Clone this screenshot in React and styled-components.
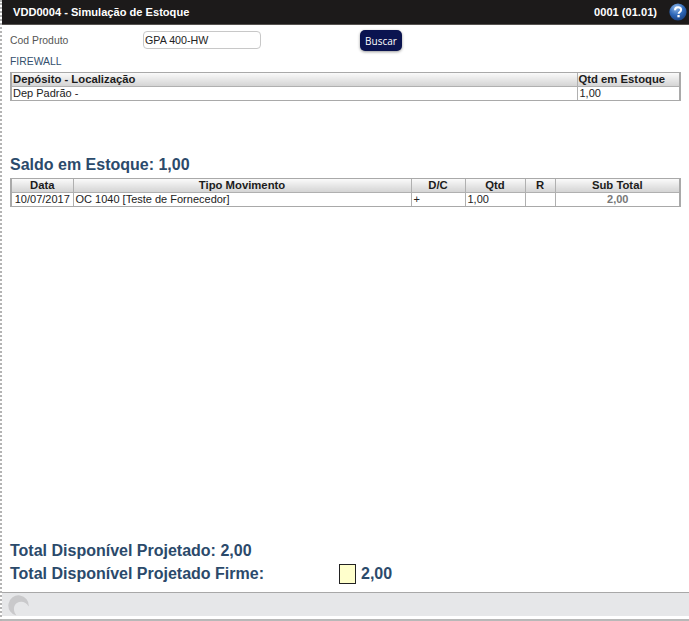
import React from 'react';
import styled, { createGlobalStyle } from 'styled-components';

const GlobalStyle = createGlobalStyle`
  html, body {
    margin: 0;
    padding: 0;
    background: #ffffff;
    font-family: "Liberation Sans", Arial, sans-serif;
  }
`;

const Page = styled.div`
  width: 689px;
  height: 621px;
  box-sizing: border-box;
  display: flex;
  flex-direction: column;
  overflow: hidden;
  background: #ffffff;
  border-left: 2px dotted #b4b4b4;
`;

const Header = styled.header`
  height: 25px;
  flex: none;
  display: flex;
  align-items: center;
  justify-content: space-between;
  padding: 0 2px 1px 11px;
  box-sizing: border-box;
  background: #1c1a1a;
  border-bottom: 1px solid #55524f;
  color: #ffffff;
  font-size: 11.1px;
  font-weight: bold;
`;

const HeaderRight = styled.div`
  display: flex;
  align-items: center;
  gap: 12px;
`;

const Content = styled.main`
  flex: 1;
  display: flex;
  flex-direction: column;
  padding: 0 8px;
  box-sizing: border-box;
  min-height: 0;
`;

const SearchRow = styled.div`
  height: 30px;
  display: flex;
  align-items: center;
  flex: none;
`;

const FieldLabel = styled.label`
  width: 133px;
  font-size: 10.4px;
  color: #555555;
  margin-top: 1px;
`;

const CodeInput = styled.input`
  width: 118px;
  height: 18px;
  box-sizing: border-box;
  padding: 0 1px;
  border: 1px solid #c8c8c8;
  border-radius: 4px;
  font-family: inherit;
  font-size: 10.7px;
  color: #222222;
  background: #ffffff;
  outline: none;
`;

const SearchButton = styled.button`
  margin-left: 99px;
  width: 42px;
  height: 21px;
  padding: 0;
  border: none;
  border-radius: 5px;
  background: #0b1450;
  box-shadow: 0 1px 3px rgba(0, 0, 0, 0.4);
  color: #ffffff;
  font-family: "Open Sans", sans-serif;
  font-size: 10px;
  margin-top: 1px;
`;

const ProductName = styled.div`
  font-size: 10.4px;
  line-height: 12px;
  color: #34506e;
  height: 17px;
  box-sizing: border-box;
  padding-top: 1px;
`;

const GridFrame = styled.div`
  width: 671px;
  box-sizing: border-box;
  flex: none;
  border: 1px solid #a9a9a9;
  border-right-width: 2px;
  border-left: 2px solid #a9a9a9;
  background: #ffffff;
`;

const Grid = styled.table`
  width: 100%;
  border-collapse: collapse;
  table-layout: fixed;
  font-size: 11px;
  color: #222222;
`;

const HeadCell = styled.th`
  height: 13px;
  padding: 0 1px;
  box-sizing: border-box;
  text-align: ${(p) => p.$align || 'center'};
  font-size: 11.3px;
  font-weight: bold;
  line-height: 13px;
  color: #1c1c1c;
  background: linear-gradient(#fafafa, #d4d4d4);
  border-left: ${(p) => (p.$first ? 'none' : '1px solid #b0b0b0')};
  border-bottom: 1px solid #b0b0b0;
  white-space: nowrap;
`;

const Cell = styled.td`
  height: 13px;
  padding: 0 1px 0 ${(p) => (p.$first ? '1px' : '2px')};
  box-sizing: border-box;
  text-align: ${(p) => p.$align || 'left'};
  line-height: 13px;
  font-weight: ${(p) => (p.$strong ? 'bold' : 'normal')};
  color: ${(p) => (p.$strong ? '#777777' : '#222222')};
  border-left: ${(p) => (p.$first ? 'none' : '1px solid #b0b0b0')};
  white-space: nowrap;
`;

const Balance = styled.h2`
  margin: 54px 0 0;
  height: 23px;
  flex: none;
  font-size: 16px;
  line-height: 19px;
  font-weight: bold;
  color: #2b4a6b;
`;

const Totals = styled.div`
  margin-top: auto;
  display: flex;
  flex-direction: column;
  gap: 3px;
  padding-bottom: 8px;
  flex: none;
`;

const TotalRow = styled.div`
  height: 20px;
  display: flex;
  align-items: center;
  font-size: 16px;
  font-weight: bold;
  color: #2b4a6b;
`;

const TotalLabel = styled.span`
  width: 329px;
`;

const Swatch = styled.span`
  width: 15px;
  height: 18px;
  margin-right: 5px;
  border: 1px solid #222222;
  background: #ffffcc;
`;

const Footer = styled.footer`
  height: 29px;
  flex: none;
  box-sizing: border-box;
  border-top: 1px solid #a8a8a8;
  border-bottom: 2px solid #b8b8b8;
  background: linear-gradient(#e6e7e9 0 23px, #ffffff 23px);
  display: flex;
  align-items: flex-start;
  padding: 2px 0 0 6px;
`;

function HelpIcon() {
  return (
    <svg width="18" height="18" viewBox="0 0 18 18">
      <defs>
        <radialGradient id="helpBall" cx="40%" cy="25%" r="80%">
          <stop offset="0" stopColor="#8fb8ea" />
          <stop offset="0.55" stopColor="#2f68b8" />
          <stop offset="1" stopColor="#173f80" />
        </radialGradient>
      </defs>
      <circle cx="9" cy="9" r="8.6" fill="url(#helpBall)" />
      <path
        d="M6 7.2C6 5.4 7.3 4.3 9.1 4.3c1.8 0 3 1 3 2.5 0 1.2-.7 1.8-1.5 2.4-.7.5-1 .8-1 1.6"
        fill="none"
        stroke="#ffffff"
        strokeWidth="2"
      />
      <rect x="8.4" y="12" width="2.3" height="2.3" fill="#ffffff" />
    </svg>
  );
}

function Spinner() {
  return (
    <svg width="21" height="21" viewBox="0 0 20 20">
      <path
        d="M19.7 11A9.7 9.7 0 1 0 8 19.5C4.6 15 5 9.6 8.5 7.5c4-2.2 9-1 11.2 3.5z"
        fill="#c9c9cb"
      />
    </svg>
  );
}

export default function App() {
  return (
    <Page>
      <GlobalStyle />
      <Header>
        <span>VDD0004 - Simulação de Estoque</span>
        <HeaderRight>
          <span>0001 (01.01)</span>
          <HelpIcon />
        </HeaderRight>
      </Header>
      <Content>
        <SearchRow>
          <FieldLabel>Cod Produto</FieldLabel>
          <CodeInput defaultValue="GPA 400-HW" />
          <SearchButton>Buscar</SearchButton>
        </SearchRow>
        <ProductName>FIREWALL</ProductName>
        <GridFrame>
          <Grid>
            <colgroup>
              <col style={{ width: 565 }} />
              <col />
            </colgroup>
            <thead>
              <tr>
                <HeadCell $first $align="left">Depósito - Localização</HeadCell>
                <HeadCell $align="left">Qtd em Estoque</HeadCell>
              </tr>
            </thead>
            <tbody>
              <tr>
                <Cell $first>Dep Padrão -</Cell>
                <Cell>1,00</Cell>
              </tr>
            </tbody>
          </Grid>
        </GridFrame>
        <Balance>Saldo em Estoque: 1,00</Balance>
        <GridFrame>
          <Grid>
            <colgroup>
              <col style={{ width: 61 }} />
              <col style={{ width: 338 }} />
              <col style={{ width: 54 }} />
              <col style={{ width: 60 }} />
              <col style={{ width: 30 }} />
              <col />
            </colgroup>
            <thead>
              <tr>
                <HeadCell $first>Data</HeadCell>
                <HeadCell>Tipo Movimento</HeadCell>
                <HeadCell>D/C</HeadCell>
                <HeadCell>Qtd</HeadCell>
                <HeadCell>R</HeadCell>
                <HeadCell>Sub Total</HeadCell>
              </tr>
            </thead>
            <tbody>
              <tr>
                <Cell $first $align="center">10/07/2017</Cell>
                <Cell>OC 1040 [Teste de Fornecedor]</Cell>
                <Cell>+</Cell>
                <Cell>1,00</Cell>
                <Cell />
                <Cell $align="center" $strong>2,00</Cell>
              </tr>
            </tbody>
          </Grid>
        </GridFrame>
        <Totals>
          <TotalRow>Total Disponível Projetado: 2,00</TotalRow>
          <TotalRow>
            <TotalLabel>Total Disponível Projetado Firme:</TotalLabel>
            <Swatch />
            2,00
          </TotalRow>
        </Totals>
      </Content>
      <Footer>
        <Spinner />
      </Footer>
    </Page>
  );
}
